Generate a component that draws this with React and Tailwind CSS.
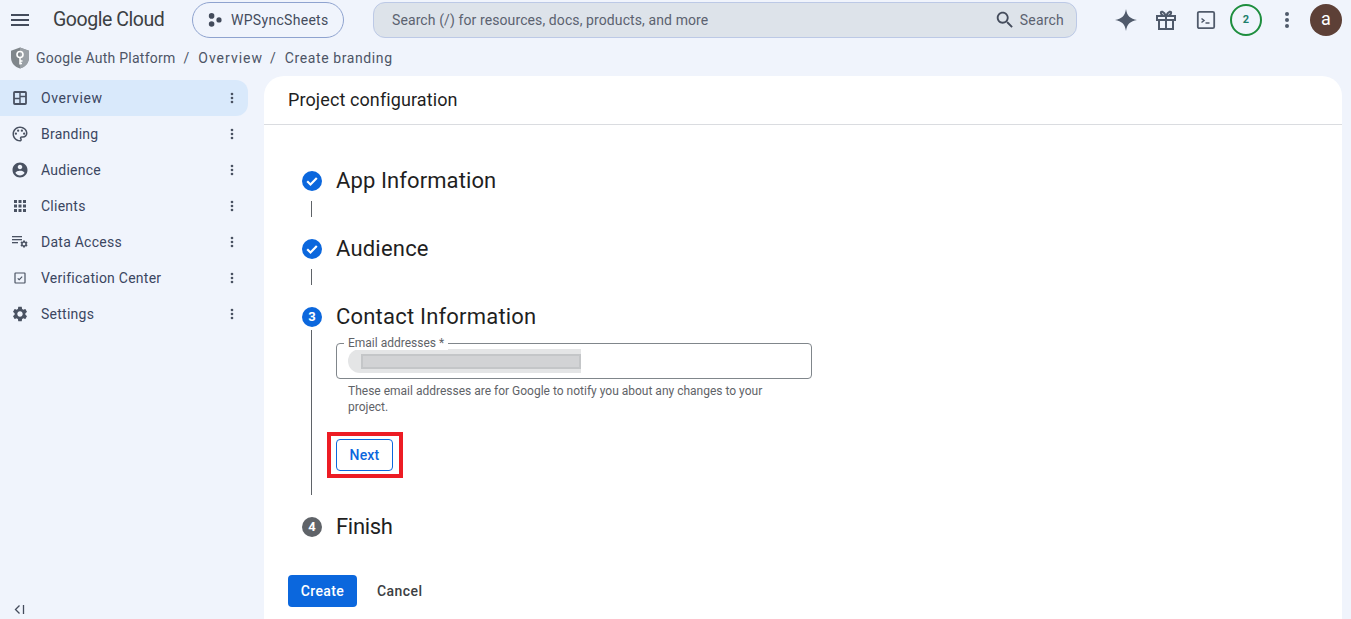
const Ic = ({ d, size = 18, className = "" }) => (
  <svg width={size} height={size} viewBox="0 0 24 24" fill="currentColor" className={className}>
    <path d={d} />
  </svg>
);

const MoreVert = ({ size = 18, className = "" }) => (
  <svg width={size} height={size} viewBox="0 0 24 24" fill="currentColor" className={className}>
    <circle cx="12" cy="6" r="2" />
    <circle cx="12" cy="12" r="2" />
    <circle cx="12" cy="18" r="2" />
  </svg>
);

const OverviewIcon = () => (
  <svg width="18" height="18" viewBox="0 0 18 18" fill="none" stroke="currentColor" strokeWidth="1.8">
    <rect x="3" y="3" width="12" height="12" rx="0.8" />
    <path d="M9 3v12M3 9.500h6M9 7.500h6" strokeWidth="1.4" />
  </svg>
);

const PaletteIcon = () => (
  <svg width="18" height="18" viewBox="0 0 24 24" fill="currentColor">
    <path d="M12 22C6.49 22 2 17.51 2 12S6.49 2 12 2s10 4.04 10 9c0 3.31-2.69 6-6 6h-1.77c-.28 0-.5.22-.5.5 0 .12.05.23.13.33.41.47.64 1.06.64 1.67 0 1.38-1.12 2.5-2.5 2.5zm0-18c-4.41 0-8 3.59-8 8s3.59 8 8 8c.28 0 .5-.22.5-.5 0-.16-.08-.28-.14-.35-.41-.46-.63-1.05-.63-1.65 0-1.38 1.12-2.5 2.5-2.5H16c2.21 0 4-1.79 4-4 0-3.86-3.59-7-8-7z" />
    <circle cx="6.5" cy="11.5" r="1.5" />
    <circle cx="9.5" cy="7.5" r="1.5" />
    <circle cx="14.5" cy="7.5" r="1.5" />
    <circle cx="17.5" cy="11.5" r="1.5" />
  </svg>
);

const AccountIcon = () => (
  <Ic d="M12 2C6.48 2 2 6.48 2 12s4.48 10 10 10 10-4.48 10-10S17.52 2 12 2zm0 3c1.66 0 3 1.34 3 3s-1.34 3-3 3-3-1.34-3-3 1.34-3 3-3zm0 14.2c-2.5 0-4.71-1.28-6-3.22.03-1.99 4-3.08 6-3.08 1.99 0 5.97 1.09 6 3.08-1.29 1.94-3.5 3.22-6 3.22z" />
);

const GridIcon = () => (
  <svg width="18" height="18" viewBox="0 0 18 18" fill="currentColor">
    {[3, 7.5, 12].map((y) =>
      [3, 7.5, 12].map((x) => <rect key={`${x}-${y}`} x={x} y={y} width="3" height="3" />)
    )}
  </svg>
);

const SettingsPath =
  "M19.14 12.94c.04-.3.06-.61.06-.94 0-.32-.02-.64-.07-.94l2.03-1.58c.18-.14.23-.41.12-.61l-1.92-3.32c-.12-.22-.37-.29-.59-.22l-2.39.96c-.5-.38-1.03-.7-1.62-.94l-.36-2.54c-.04-.24-.24-.41-.48-.41h-3.84c-.24 0-.43.17-.47.41l-.36 2.54c-.59.24-1.13.57-1.62.94l-2.39-.96c-.22-.08-.47 0-.59.22L2.74 8.87c-.12.21-.08.47.12.61l2.03 1.58c-.05.3-.09.63-.09.94s.02.64.07.94l-2.03 1.58c-.18.14-.23.41-.12.61l1.92 3.32c.12.22.37.29.59.22l2.39-.96c.5.38 1.03.7 1.62.94l.36 2.54c.05.24.24.41.48.41h3.84c.24 0 .44-.17.47-.41l.36-2.54c.59-.24 1.13-.56 1.62-.94l2.39.96c.22.08.47 0 .59-.22l1.92-3.32c.12-.22.07-.47-.12-.61l-2.01-1.58zM12 15.6c-1.98 0-3.6-1.62-3.6-3.6s1.62-3.6 3.6-3.6 3.6 1.62 3.6 3.6-1.62 3.6-3.6 3.6z";

const DataAccessIcon = () => (
  <svg width="18" height="18" viewBox="0 0 18 18" fill="currentColor">
    <rect x="1" y="3" width="10" height="1.3" />
    <rect x="1" y="6" width="10" height="1.3" />
    <rect x="1" y="9" width="6" height="1.3" />
    <svg x="8.5" y="6.5" width="9" height="9" viewBox="0 0 24 24">
      <path d={SettingsPath} />
    </svg>
  </svg>
);

const VerifyIcon = () => (
  <svg width="18" height="18" viewBox="0 0 18 18" fill="none" stroke="currentColor">
    <rect x="4" y="4" width="10" height="10" rx="0.5" strokeWidth="1.2" />
    <path d="M6.7 9.3l1.5 1.4 3-3" strokeWidth="1.1" />
  </svg>
);

const navItems = [
  { label: "Overview", icon: <OverviewIcon />, active: true },
  { label: "Branding", icon: <PaletteIcon /> },
  { label: "Audience", icon: <AccountIcon /> },
  { label: "Clients", icon: <GridIcon /> },
  { label: "Data Access", icon: <DataAccessIcon /> },
  { label: "Verification Center", icon: <VerifyIcon /> },
  { label: "Settings", icon: <Ic d={SettingsPath} /> },
];

const CheckBadge = () => (
  <svg width="20" height="20" viewBox="0 0 20 20" className="shrink-0">
    <circle cx="10" cy="10" r="10" fill="#0b67dd" />
    <path d="M5.2 10.300l3.300 3.200 6.300-6.400" fill="none" stroke="#fff" strokeWidth="2.200" />
  </svg>
);

const NumBadge = ({ n, color }) => (
  <div
    className={`w-5 h-5 rounded-full shrink-0 flex items-center justify-center text-white text-[13px] font-bold ${color}`}
  >
    {n}
  </div>
);

const StepTitle = ({ badge, children, tracking = "tracking-[0.2px]" }) => (
  <div className="flex items-center gap-[14px] h-7">
    {badge}
    <h2 className={`text-[22px] text-[#1f1f1f] leading-7 font-normal ${tracking}`}>{children}</h2>
  </div>
);

const Connector = ({ className = "" }) => (
  <div className={`w-px bg-[#5f6368] ml-[9px] ${className}`} />
);

function App() {
  return (
    <div
      className="h-screen overflow-hidden bg-[#f0f4fc] flex flex-col text-[14px] text-[#444c5c]"
      style={{ fontFamily: "Roboto, 'Noto Sans', sans-serif" }}
    >
      {/* barra superior */}
      <header className="h-10 shrink-0 flex items-center pl-[8px] pr-[9px]">
        <svg width="24" height="24" viewBox="0 0 24 24" fill="#444c5c">
          <path d="M3 18h18v-2H3v2zm0-5h18v-2H3v2zm0-7v2h18V6H3z" />
        </svg>
        <span className="ml-[21px] text-[19.5px] font-normal tracking-[-0.45px] text-[#3c4043] w-[111px] whitespace-nowrap">
          Google Cloud
        </span>
        <button className="ml-[28px] w-[152px] h-9 rounded-full border border-[#8fa3cf] flex items-center pl-[15px] gap-[9px]">
          <svg width="14" height="14" viewBox="0 0 14 14" fill="#444c5c">
            <circle cx="3.6" cy="2.9" r="2.8" />
            <circle cx="3.6" cy="11" r="2.8" />
            <circle cx="11" cy="6.9" r="2.6" />
          </svg>
          <span className="text-[#444c5c] tracking-[0.3px]">WPSyncSheets</span>
        </button>
        <div className="ml-[29px] w-[704px] h-9 rounded-[12px] border border-[#bcc9e6] bg-[#dde3ea] flex items-center pl-[18px] pr-3">
          <span className="flex-1 text-[#5b6270] tracking-[0.1px]">Search (/) for resources, docs, products, and more</span>
          <Ic
            size={22}
            className="mr-[4px] text-[#444c5c]"
            d="M15.5 14h-.79l-.28-.27C15.41 12.59 16 11.11 16 9.5 16 5.91 13.09 3 9.5 3S3 5.91 3 9.5 5.91 16 9.5 16c1.61 0 3.09-.59 4.23-1.57l.27.28v.79l5 4.99L20.49 19l-4.99-5zm-6 0C7.01 14 5 11.99 5 9.5S7.01 5 9.5 5 14 7.01 14 9.5 11.99 14 9.5 14z"
          />
          <span className="text-[#5b6270] tracking-[0.2px]">Search</span>
        </div>
        <div className="flex items-center ml-auto text-[#505a6b]">
          <svg width="24" height="24" viewBox="0 0 24 24" fill="currentColor" className="mr-[16px]">
            <path d="M12 1c.9 6.6 4.4 10.1 11 11-6.6.9-10.1 4.4-11 11-.9-6.6-4.4-10.1-11-11 6.6-.9 10.1-4.4 11-11z" />
          </svg>
          <svg width="24" height="24" viewBox="0 0 24 24" fill="none" stroke="currentColor" strokeWidth="2" className="mr-[16px]">
            <path d="M3 8h18v4H3zM5 12v9h14v-9M12 8v13M12 8C10 3 6 2.5 7 5.5 7.5 7 9 8 12 8zM12 8c2-5 6-5.500 5-2.500C16.500 7 15 8 12 8z" />
          </svg>
          <svg width="24" height="24" viewBox="0 0 24 24" fill="none" stroke="currentColor" className="mr-[12px]">
            <rect x="3.800" y="3.800" width="16.400" height="16.400" rx="1.500" strokeWidth="1.800" />
            <path d="M7.500 10.500l2.500 2-2.500 2M11.500 15h4" strokeWidth="1.500" />
          </svg>
          <div className="w-8 h-8 rounded-full border-2 border-[#1e8e3e] flex items-center justify-center text-[11px] font-bold text-[#1e7f6c] mr-[13px]">
            2
          </div>
          <MoreVert size={24} className="mr-[11px]" />
          <div className="w-8 h-8 rounded-full bg-[#5d4037] flex items-center justify-center text-white text-[18px] leading-none pb-[2px]">
            a
          </div>
        </div>
      </header>

      {/* migalhas */}
      <div className="h-9 shrink-0 flex items-center pl-[10px] text-[#4d5566]">
        <svg width="20" height="24" viewBox="0 0 20 24" className="mr-[6px]">
          <path d="M10 1.500l9 3.200v6.800c0 5.200-3.700 9.700-9 11-5.300-1.300-9-5.800-9-11V4.700z" fill="#80868b" />
          <path d="M10 1.500l9 3.200v6.800c0 5.200-3.700 9.700-9 11z" fill="#9aa0a6" />
          <circle cx="10" cy="8.500" r="3" fill="none" stroke="#fff" strokeWidth="1.600" />
          <path d="M10 11.500v7M10 15h2.500M10 17.500h2" stroke="#fff" strokeWidth="1.500" fill="none" />
        </svg>
        <span className="tracking-[0.25px]">Google Auth Platform</span>
        <span className="ml-[8px] mr-[9px]">/</span>
        <span className="tracking-[1px]">Overview</span>
        <span className="ml-[7px] mr-[9px]">/</span>
        <span className="tracking-[0.6px]">Create branding</span>
      </div>

      <div className="flex-1 flex min-h-0">
        {/* menu lateral */}
        <aside className="w-[264px] shrink-0 pt-1 relative">
          <nav>
            {navItems.map((item) => (
              <div
                key={item.label}
                className={`h-9 w-[248px] flex items-center pl-[11px] pr-2 rounded-r-[12px] ${
                  item.active ? "bg-[#d9e9fb] rounded-l-none" : ""
                }`}
              >
                <span className="w-[30px] shrink-0 text-[#4a5262]">{item.icon}</span>
                <span
                  className={`flex-1 text-[#3b4661] ${item.active ? "tracking-[0.6px]" : "tracking-[0.25px]"}`}
                >
                  {item.label}
                </span>
                <MoreVert size={16} className="text-[#4a5262]" />
              </div>
            ))}
          </nav>
          <svg width="14" height="14" viewBox="0 0 14 14" fill="none" stroke="#444c5c" strokeWidth="1.300" className="absolute left-[13px] bottom-[3px]">
            <path d="M6.500 3.500L2.500 7.500l4 4M10.500 3v9" />
          </svg>
        </aside>

        {/* painel principal */}
        <main className="w-[1078px] bg-white rounded-t-[20px] flex flex-col">
          <div className="h-[49px] shrink-0 border-b border-[#dadce0] flex items-center pl-6 pb-[1px]">
            <h1 className="text-[18px] text-[#1f1f1f] font-normal tracking-[0.1px]">Project configuration</h1>
          </div>

          <div className="pl-[38px] pt-[42px] flex flex-col">
            <StepTitle badge={<CheckBadge />} tracking="tracking-[0.1px]">App Information</StepTitle>
            <Connector className="h-4 mt-[6px] mb-[18px]" />
            <StepTitle badge={<CheckBadge />}>Audience</StepTitle>
            <Connector className="h-4 mt-[6px] mb-[18px]" />
            <StepTitle badge={<NumBadge n="3" color="bg-[#0b67dd]" />}>Contact Information</StepTitle>

            <div className="flex">
              <Connector className="h-[165px] mt-[-1px]" />
              <div className="ml-[24px]">
                <div className="relative mt-[12px] w-[476px] h-9 border border-[#80868b] rounded-[4px] flex items-center pl-[11px]">
                  <span className="absolute left-[7px] top-[-8px] bg-white px-[4px] text-[12px] leading-[14px] text-[#5f6368]">
                    Email addresses *
                  </span>
                  <div className="w-[233px] h-6 rounded-l-full bg-[#e4e5e6] flex items-center pl-[13px]">
                    <div className="w-[220px] h-[15px] bg-[#d2d3d5] border-2 border-[#c4c6c8]" />
                  </div>
                </div>
                <p className="ml-3 mt-[4px] w-[440px] text-[12px] leading-4 text-[#5f6368]">
                  These email addresses are for Google to notify you about any changes to your project.
                </p>
                <div className="mt-[17px] ml-[-9px] w-[76px] h-[46px] border-4 border-[#ed1c24] flex items-center pl-[5px]">
                  <button className="w-[57px] h-8 rounded-[4px] border border-[#0b67dd] text-[#0b67dd] font-medium bg-white text-[14px] tracking-[0.2px]">
                    Next
                  </button>
                </div>
              </div>
            </div>

            <div className="mt-[18px]">
              <StepTitle badge={<NumBadge n="4" color="bg-[#5f6368]" />} tracking="tracking-[-0.3px]">Finish</StepTitle>
            </div>
          </div>

          <div className="pl-6 mt-[34px] flex items-center">
            <button className="w-[69px] h-8 rounded-[4px] bg-[#0b67dd] text-white font-medium tracking-[0.4px]">
              Create
            </button>
            <button className="ml-5 text-[#3c4043] font-medium tracking-[0.45px]">Cancel</button>
          </div>
        </main>
      </div>
    </div>
  );
}

export default App;
